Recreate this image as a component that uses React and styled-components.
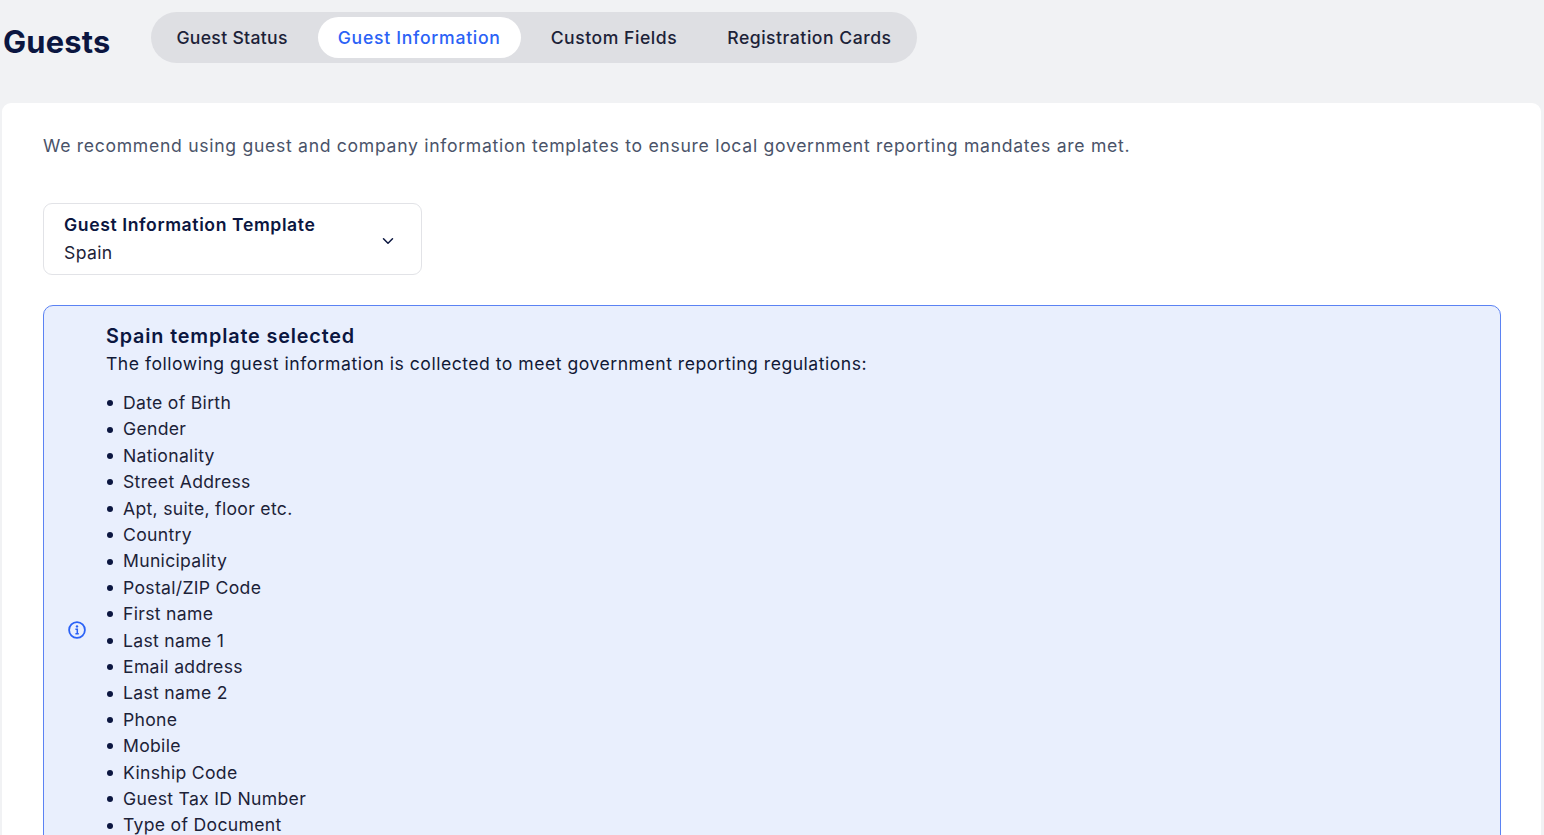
import React from 'react';
import styled, { createGlobalStyle } from 'styled-components';
import { ChevronDown } from 'lucide-react';

const GlobalStyle = createGlobalStyle`
  html, body {
    margin: 0;
    height: 100%;
    overflow: hidden;
  }
  body {
    background: #f1f2f4;
    font-family: Inter, "Liberation Sans", sans-serif;
    color: #0b1640;
  }
`;

const Page = styled.div`
  display: flex;
  flex-direction: column;
  padding: 12px 3px 0 2px;
`;

const Header = styled.header`
  display: flex;
  align-items: center;
  height: 51px;
  gap: 41px;
`;

const Title = styled.h1`
  margin: 8px 0 0 1px;
  font-size: 30.8px;
  font-weight: 700;
  letter-spacing: 0.2px;
  color: #0b1640;
`;

const Tabs = styled.nav`
  display: flex;
  gap: 10px;
  padding: 5px;
  background: #dedfe3;
  border-radius: 26px;
`;

const Tab = styled.button`
  height: 41px;
  padding: 0 20px;
  border: 0;
  border-radius: 21px;
  font-family: inherit;
  font-size: 17.6px;
  font-weight: 500;
  letter-spacing: ${(p) => p.$spacing}px;
  background: ${(p) => (p.$active ? '#fff' : 'transparent')};
  color: ${(p) => (p.$active ? '#2b62f6' : '#1c2238')};
`;

const Card = styled.main`
  margin-top: 40px;
  padding: 30px 40px 0 41px;
  background: #fff;
  border-radius: 9px 9px 0 0;
`;

const Intro = styled.p`
  margin: 0 0 44px;
  font-size: 17.6px;
  line-height: 26.4px;
  letter-spacing: 0.7px;
  color: #4a5369;
`;

const Select = styled.div`
  box-sizing: border-box;
  display: flex;
  align-items: center;
  justify-content: space-between;
  width: 379px;
  height: 72px;
  margin-bottom: 30px;
  padding: 0 24px 1px 20px;
  border: 1px solid #e2e3e7;
  border-radius: 9px;
`;

const SelectLabel = styled.div`
  font-size: 17.6px;
  line-height: 27.5px;
  font-weight: 600;
  letter-spacing: 0.6px;
  color: #0b1640;
`;

const SelectValue = styled.div`
  margin-top: 0.5px;
  font-size: 17.6px;
  line-height: 27.5px;
  letter-spacing: 0.35px;
  color: #1c2238;
`;

const SelectChevron = styled(ChevronDown)`
  margin-top: 5px;
`;

const Alert = styled.section`
  box-sizing: border-box;
  display: flex;
  align-items: center;
  gap: 20px;
  width: 1458px;
  min-height: 650px;
  padding: 16px 24px 17px 24px;
  background: #e9effd;
  border: 1px solid #5b82f3;
  border-radius: 10px;
`;

const AlertIcon = styled.svg`
  flex: none;
  width: 18px;
  height: 18px;
  color: #2b62f6;
`;

const AlertBody = styled.div`
  flex: 1;
  align-self: flex-start;
`;

const AlertTitle = styled.h2`
  margin: 0;
  font-size: 19.8px;
  line-height: 28px;
  font-weight: 600;
  letter-spacing: 0.85px;
  color: #0b1640;
`;

const AlertText = styled.p`
  margin: 0 0 11px;
  font-size: 17.6px;
  line-height: 28.5px;
  letter-spacing: 0.5px;
  color: #111936;
`;

const FieldList = styled.ul`
  margin: 0;
  padding: 0;
  list-style: none;
`;

const Field = styled.li`
  display: flex;
  align-items: center;
  font-size: 17.6px;
  line-height: 26.4px;
  letter-spacing: 0.3px;
  color: #1c2238;

  &::before {
    content: '';
    flex: none;
    width: 6px;
    height: 6px;
    margin: 0 10px 0 1px;
    border-radius: 50%;
    background: #0b1640;
  }
`;

const tabs = [
  { label: 'Guest Status', spacing: 0.3 },
  { label: 'Guest Information', spacing: 0.72, active: true },
  { label: 'Custom Fields', spacing: 0.53 },
  { label: 'Registration Cards', spacing: 0.52 },
];

const fields = [
  'Date of Birth',
  'Gender',
  'Nationality',
  'Street Address',
  'Apt, suite, floor etc.',
  'Country',
  'Municipality',
  'Postal/ZIP Code',
  'First name',
  'Last name 1',
  'Email address',
  'Last name 2',
  'Phone',
  'Mobile',
  'Kinship Code',
  'Guest Tax ID Number',
  'Type of Document',
];

const InfoIcon = () => (
  <AlertIcon viewBox="0 0 18 18" fill="none">
    <circle cx="9" cy="9" r="7.9" stroke="currentColor" strokeWidth="1.8" />
    <circle cx="9" cy="5.4" r="1.2" fill="currentColor" />
    <path
      d="M7.4 8.2H9.3V12.6M7.4 12.8H10.8"
      stroke="currentColor"
      strokeWidth="1.5"
    />
  </AlertIcon>
);

const App = () => {
  return (
    <>
      <GlobalStyle />
      <Page>
        <Header>
          <Title>Guests</Title>
          <Tabs>
            {tabs.map((tab) => (
              <Tab key={tab.label} $active={tab.active} $spacing={tab.spacing}>
                {tab.label}
              </Tab>
            ))}
          </Tabs>
        </Header>
        <Card>
          <Intro>
            We recommend using guest and company information templates to ensure local government
            reporting mandates are met.
          </Intro>
          <Select>
            <div>
              <SelectLabel>Guest Information Template</SelectLabel>
              <SelectValue>Spain</SelectValue>
            </div>
            <SelectChevron size={18} color="#0b1640" strokeWidth={2} />
          </Select>
          <Alert>
            <InfoIcon />
            <AlertBody>
              <AlertTitle>Spain template selected</AlertTitle>
              <AlertText>
                The following guest information is collected to meet government reporting
                regulations:
              </AlertText>
              <FieldList>
                {fields.map((field) => (
                  <Field key={field}>{field}</Field>
                ))}
              </FieldList>
            </AlertBody>
          </Alert>
        </Card>
      </Page>
    </>
  );
};

export default App;
